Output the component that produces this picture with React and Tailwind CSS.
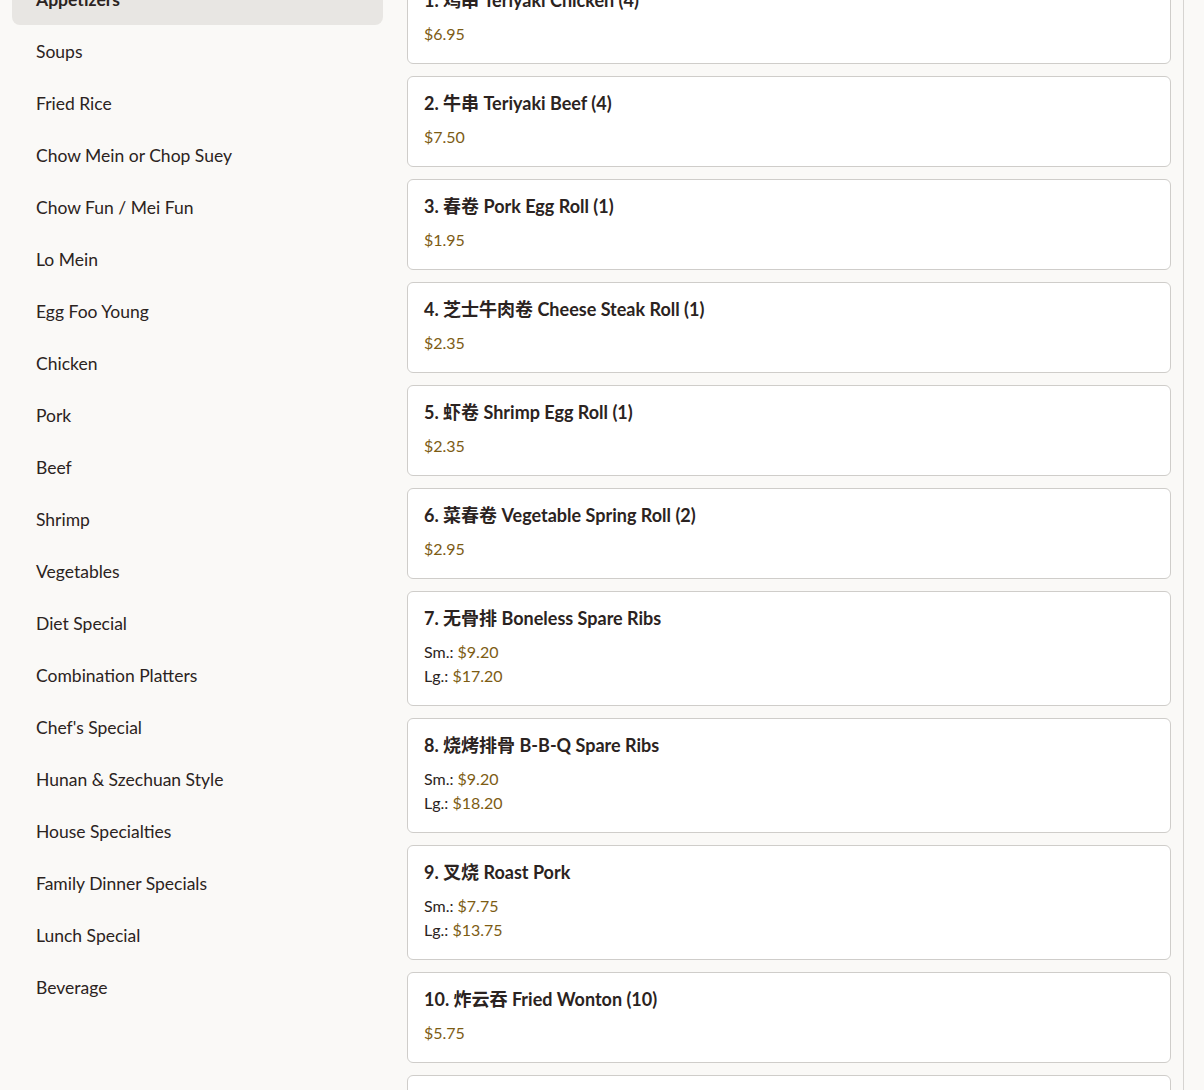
const categories = [
  "Appetizers",
  "Soups",
  "Fried Rice",
  "Chow Mein or Chop Suey",
  "Chow Fun / Mei Fun",
  "Lo Mein",
  "Egg Foo Young",
  "Chicken",
  "Pork",
  "Beef",
  "Shrimp",
  "Vegetables",
  "Diet Special",
  "Combination Platters",
  "Chef's Special",
  "Hunan & Szechuan Style",
  "House Specialties",
  "Family Dinner Specials",
  "Lunch Special",
  "Beverage",
];

const items = [
  { name: "1. 鸡串 Teriyaki Chicken (4)", price: "$6.95" },
  { name: "2. 牛串 Teriyaki Beef (4)", price: "$7.50" },
  { name: "3. 春卷 Pork Egg Roll (1)", price: "$1.95" },
  { name: "4. 芝士牛肉卷 Cheese Steak Roll (1)", price: "$2.35" },
  { name: "5. 虾卷 Shrimp Egg Roll (1)", price: "$2.35" },
  { name: "6. 菜春卷 Vegetable Spring Roll (2)", price: "$2.95" },
  { name: "7. 无骨排 Boneless Spare Ribs", sm: "$9.20", lg: "$17.20" },
  { name: "8. 烧烤排骨 B-B-Q Spare Ribs", sm: "$9.20", lg: "$18.20" },
  { name: "9. 叉烧 Roast Pork", sm: "$7.75", lg: "$13.75" },
  { name: "10. 炸云吞 Fried Wonton (10)", price: "$5.75" },
  { name: "11. 蟹角 Crab Rangoon (8)", price: "$6.25" },
];

function MenuCard({ item }) {
  return (
    <div className="bg-white border border-[#cfcdca] rounded-md px-4 pt-[14px] pb-[17px]">
      <h3 className="text-[18px] leading-6 font-bold text-[#2b2321]">
        {item.name}
      </h3>
      <div className="mt-[10px] text-[16px] leading-6">
        {item.price ? (
          <div className="text-[#7d5c14]">{item.price}</div>
        ) : (
          <>
            <div className="text-[#2b2321]">
              Sm.: <span className="text-[#7d5c14]">{item.sm}</span>
            </div>
            <div className="text-[#2b2321]">
              Lg.: <span className="text-[#7d5c14]">{item.lg}</span>
            </div>
          </>
        )}
      </div>
    </div>
  );
}

export default function App() {
  return (
    <div
      className="h-[1090px] overflow-hidden bg-[#faf9f7] flex"
      style={{ fontFamily: "Lato, 'Noto Sans CJK SC', sans-serif" }}
    >
      <aside className="w-[371px] ml-3 shrink-0 -mt-[27px]">
        {categories.map((c, i) => (
          <div
            key={c}
            className={
              i === 0
                ? "px-6 pt-[13px] pb-[11px] text-[17.5px] leading-7 rounded-lg bg-[#e8e6e3] font-bold text-[#2b2321]"
                : "px-6 pt-[13px] pb-[11px] text-[17.5px] leading-7 text-[#2b2321]"
            }
          >
            {c}
          </div>
        ))}
      </aside>
      <main className="flex-1 ml-6 pr-3 border-r border-[#d6d4d1] -mt-[27px] mr-5">
        <div className="flex flex-col gap-3">
          {items.map((item) => (
            <MenuCard key={item.name} item={item} />
          ))}
        </div>
      </main>
    </div>
  );
}
